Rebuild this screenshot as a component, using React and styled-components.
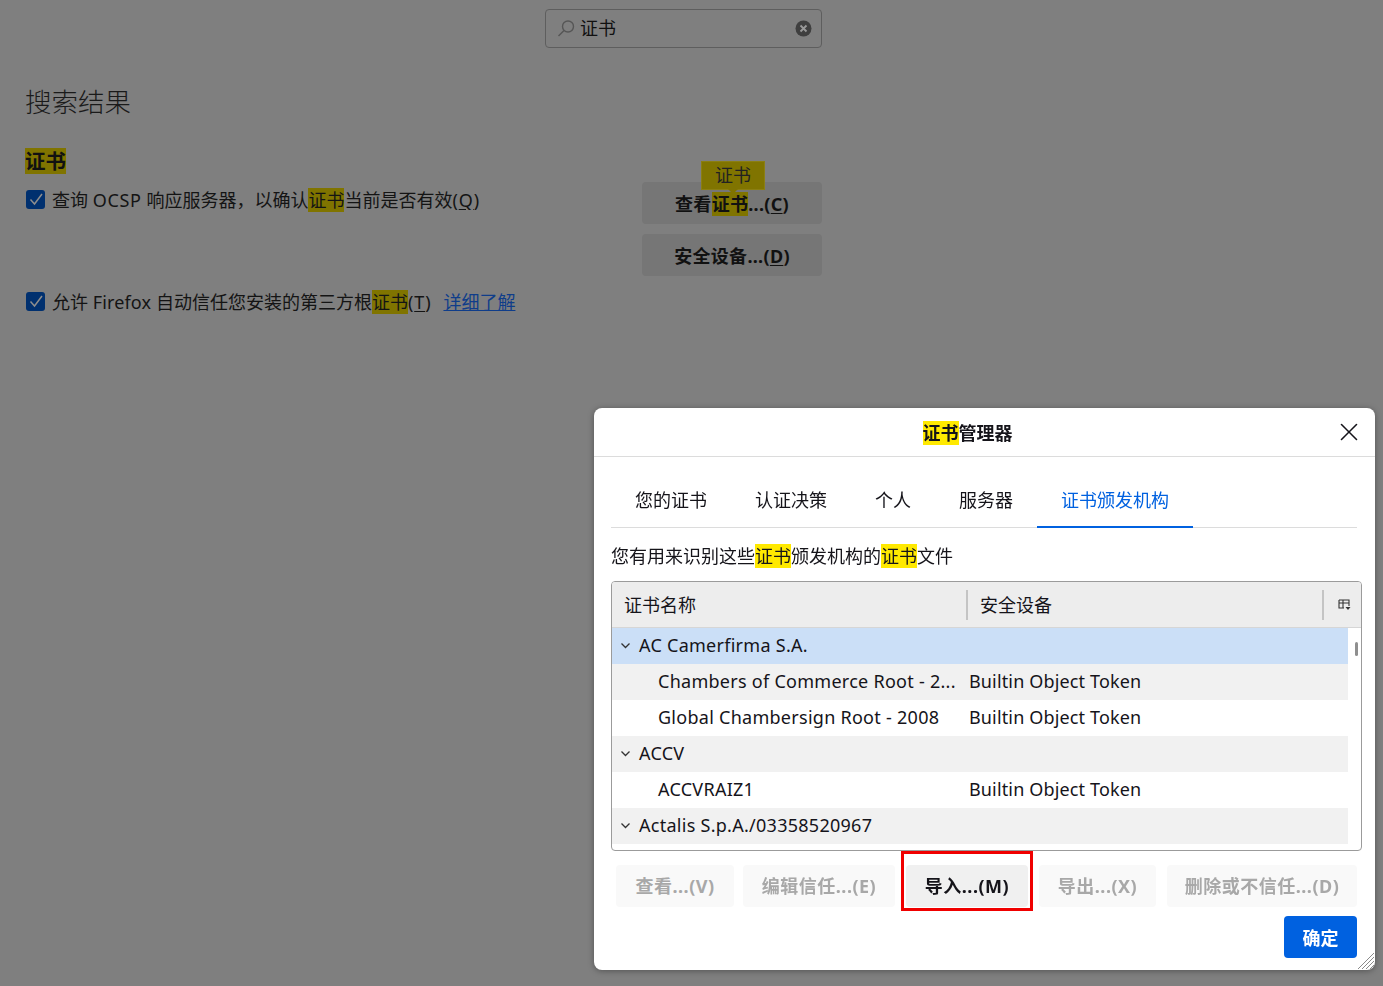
import React from 'react';
import styled, { createGlobalStyle } from 'styled-components';
import { X } from 'lucide-react';

const Global = createGlobalStyle`
html, body {
  margin: 0;
  background: #7f7f7f;
  overflow: hidden;
}
body {
  font-family: "Noto Sans", "Noto Sans CJK SC", sans-serif;
  color: #111;
}
`

const Page = styled.div`
width: 797px;
height: 986px;
padding: 9px 0 0 25px;
box-sizing: content-box;
`
const SearchBox = styled.div`
width: 277px;
height: 39px;
margin-left: 520px;
box-sizing: border-box;
border: 1px solid #5e5e5e;
border-radius: 4px;
display: flex;
align-items: center;
padding: 0 9px 0 10px;
gap: 4px;
font-size: 18px;
`
const SearchText = styled.span`
flex: 1;
padding-bottom: 3px;
`
const Heading = styled.h1`
margin: 34px 0 0;
font-size: 26.5px;
line-height: 40px;
font-weight: 300;
color: #1a1a1a;
`
const SectionTitle = styled.h2`
margin: 26px 0 0;
font-size: 20.5px;
line-height: 26px;
font-weight: 700;
display: flex;
`
const Settings = styled.div`
display: flex;
justify-content: space-between;
margin-top: 12px;
`
const Column = styled.div`
display: flex;
flex-direction: column;
`
const CheckRow = styled.label`
display: flex;
align-items: center;
gap: 7px;
height: 26px;
margin-top: ${p => p.$top || 0}px;
font-size: 18px;
color: #141414;
white-space: nowrap;
`
const Box = styled.span`
width: 19px;
height: 19px;
margin-left: 1px;
border-radius: 3px;
background: #00306f;
display: flex;
align-items: center;
justify-content: center;
flex: none;
`
const Mark = styled.span`
background: ${p => (p.$bright ? '#ffe900' : '#807400')};
`
const Latin = styled.span`
letter-spacing: ${p => p.$s}px;
`
const Key = styled.span`
letter-spacing: 0.9px;
`
const KeyLetter = styled.span`
text-decoration: underline;
text-underline-offset: 2px;
`
const LearnMore = styled.a`
color: #0f3d8a;
text-decoration: underline;
margin-left: 5px;
`
const SideButtons = styled.div`
display: flex;
flex-direction: column;
gap: 10px;
width: 180px;
margin-top: -4px;
`
const DimButton = styled.div`
position: relative;
height: 42px;
border-radius: 4px;
background: #767676;
display: flex;
align-items: center;
justify-content: center;
font-size: 18px;
font-weight: 700;
letter-spacing: 0.3px;
color: #111;
`
const Tip = styled.div`
position: absolute;
left: 59px;
top: -21px;
width: 64px;
height: 29px;
box-sizing: border-box;
border: 1px solid #8b7f12;
background: #807400;
color: #222;
font-size: 18px;
font-weight: 400;
letter-spacing: 0;
text-align: center;
line-height: 27px;
&::after {
  content: "";
  position: absolute;
  left: 26px;
  bottom: -5px;
  border: 5px solid transparent;
  border-bottom: 0;
  border-top-color: #807400;
}
`
const Dialog = styled.div`
position: fixed;
left: 594px;
top: 408px;
width: 781px;
height: 562px;
background: #fff;
border-radius: 8px;
box-shadow: 0 1px 6px rgba(0, 0, 0, 0.35);
display: flex;
flex-direction: column;
overflow: hidden;
`
const TitleBar = styled.div`
position: relative;
height: 49px;
flex: none;
box-sizing: border-box;
padding-right: 34px;
border-bottom: 1px solid #dcdcdc;
display: flex;
align-items: center;
justify-content: center;
font-size: 18px;
font-weight: 700;
color: #15141a;
`
const CloseBtn = styled.span`
position: absolute;
right: 11px;
top: 9px;
display: flex;
color: #15141a;
`
const Body = styled.div`
flex: 1;
display: flex;
flex-direction: column;
padding: 0 13px 12px 17px;
position: relative;
`
const Tabs = styled.div`
display: flex;
margin-top: 25px;
margin-right: 5px;
height: 46px;
box-sizing: border-box;
border-bottom: 1px solid #dcdcdc;
`
const Tab = styled.div`
padding: 0 24px;
height: 46px;
box-sizing: border-box;
font-size: 18px;
line-height: 36px;
color: ${p => (p.$active ? '#0061e0' : '#15141a')};
border-bottom: 2px solid ${p => (p.$active ? '#0061e0' : 'transparent')};
`
const Description = styled.p`
margin: 14px 0 0;
font-size: 18px;
line-height: 28px;
color: #15141a;
display: flex;
`
const Table = styled.div`
position: relative;
margin-top: 11px;
height: 270px;
box-sizing: border-box;
border: 1px solid #9b9b9b;
border-radius: 4px;
overflow: hidden;
`
const Head = styled.div`
height: 46px;
box-sizing: border-box;
background: #ededed;
border-bottom: 1px solid #d6d6d6;
display: grid;
grid-template-columns: 356px 356px 1fr;
align-items: center;
font-size: 18px;
color: #15141a;
`
const HeadCell = styled.div`
height: 30px;
line-height: 30px;
padding-left: ${p => p.$pad || 12}px;
box-sizing: border-box;
border-right: ${p => (p.$last ? 'none' : '2px solid #c4c4c4')};
display: flex;
align-items: center;
`
const Rows = styled.div`
width: 736px;
`
const Row = styled.div`
height: 36px;
box-sizing: border-box;
padding-bottom: 2px;
display: grid;
grid-template-columns: 357px 1fr;
align-items: center;
font-size: 18px;
color: #15141a;
white-space: nowrap;
background: ${p => p.$bg || '#fff'};
`
const Name = styled.div`
display: flex;
align-items: center;
padding-left: ${p => (p.$group ? 8 : 46)}px;
gap: 8px;
letter-spacing: 0.27px;
`
const Token = styled.div`
letter-spacing: 0.15px;
`
const Thumb = styled.div`
position: absolute;
right: 3px;
top: 60px;
width: 3px;
height: 14px;
border-radius: 2px;
background: #8f8f8f;
`
const Actions = styled.div`
display: flex;
margin-top: 14px;
padding-left: 5px;
margin-right: 5px;
gap: 11px;
`
const Action = styled.div`
position: relative;
height: 42px;
width: ${p => p.$w}px;
box-sizing: border-box;
padding-bottom: 2px;
border-radius: 4px;
background: ${p => (p.$on ? '#f0f0f0' : '#f9f9f9')};
color: ${p => (p.$on ? '#15141a' : '#a8a8a8')};
font-size: 18px;
font-weight: 700;
letter-spacing: 0.5px;
display: flex;
align-items: center;
justify-content: center;
&:first-child {
  margin-right: -2px;
}
`
const RedFrame = styled.div`
position: absolute;
left: -5px;
top: -14px;
width: 132px;
height: 60px;
box-sizing: border-box;
border: 3px solid #f00000;
`
const Footer = styled.div`
display: flex;
justify-content: flex-end;
margin-top: 9px;
margin-right: 5px;
`
const Primary = styled.div`
width: 73px;
height: 42px;
border-radius: 4px;
background: #0061e0;
color: #fff;
font-size: 18px;
font-weight: 700;
display: flex;
align-items: center;
justify-content: center;
`
const Grip = styled.svg`
position: absolute;
right: 0;
bottom: 0;
`

const Check = () => (
  <Box>
    <svg width="16" height="16" viewBox="0 0 16 16" fill="none" stroke="#8d8d8d" strokeWidth="1.5">
      <path d="M2.5 8.5 L6.5 13 L14 3" />
    </svg>
  </Box>
)

const Chevron = () => (
  <svg width="11" height="11" viewBox="0 0 11 11" fill="none" stroke="#333" strokeWidth="1.3">
    <path d="M1.5 3.5 L5.5 7.5 L9.5 3.5" />
  </svg>
)

const Access = ({ letra }) => (
  <Key>(<KeyLetter>{letra}</KeyLetter>)</Key>
)

const lista = [
  { nome: 'AC Camerfirma S.A.', grupo: true, cor: '#cbdff7' },
  { nome: 'Chambers of Commerce Root - 2...', token: 'Builtin Object Token', cor: '#f1f1f1' },
  { nome: 'Global Chambersign Root - 2008', token: 'Builtin Object Token' },
  { nome: 'ACCV', grupo: true, cor: '#f1f1f1' },
  { nome: 'ACCVRAIZ1', token: 'Builtin Object Token' },
  { nome: 'Actalis S.p.A./03358520967', grupo: true, cor: '#f1f1f1' },
]

const App = () => {
  const linhas = lista.map((item) => (
    <Row key={item.nome} $bg={item.cor}>
      <Name $group={item.grupo}>
        {item.grupo && <Chevron />}
        {item.nome}
      </Name>
      <Token>{item.token}</Token>
    </Row>
  ))

  return (
    <>
      <Global />
      <Page>
        <SearchBox>
          <svg width="20" height="20" viewBox="0 0 20 20" fill="none" stroke="#565656" strokeWidth="1.4">
            <circle cx="12" cy="7.5" r="5.5" />
            <path d="M8 11.5 L2.5 17" />
          </svg>
          <SearchText>证书</SearchText>
          <svg width="17" height="17" viewBox="0 0 17 17">
            <circle cx="8.5" cy="8.5" r="8" fill="#3f3f3f" />
            <path d="M5.5 5.5 L11.5 11.5 M11.5 5.5 L5.5 11.5" stroke="#999" strokeWidth="1.8" />
          </svg>
        </SearchBox>
        <Heading>搜索结果</Heading>
        <SectionTitle><Mark>证书</Mark></SectionTitle>
        <Settings>
          <Column>
            <CheckRow>
              <Check />
              <span>查询 <Latin $s={0.7}>OCSP</Latin> 响应服务器，以确认<Mark>证书</Mark>当前是否有效<Access letra="Q" /></span>
            </CheckRow>
          </Column>
          <SideButtons>
            <DimButton>
              <span>查看<Mark>证书</Mark>...(<KeyLetter>C</KeyLetter>)</span>
              <Tip>证书</Tip>
            </DimButton>
            <DimButton><span>安全设备...(<KeyLetter>D</KeyLetter>)</span></DimButton>
          </SideButtons>
        </Settings>
        <CheckRow $top={12}>
          <Check />
          <span>允许 <Latin $s={0.15}>Firefox</Latin> 自动信任您安装的第三方根<Mark>证书</Mark><Access letra="T" /></span>
          <LearnMore>详细了解</LearnMore>
        </CheckRow>
      </Page>

      <Dialog>
        <TitleBar>
          <span><Mark $bright>证书</Mark>管理器</span>
          <CloseBtn><X size={30} strokeWidth={1.25} /></CloseBtn>
        </TitleBar>
        <Body>
          <Tabs>
            <Tab>您的证书</Tab>
            <Tab>认证决策</Tab>
            <Tab>个人</Tab>
            <Tab>服务器</Tab>
            <Tab $active>证书颁发机构</Tab>
          </Tabs>
          <Description>
            <span>您有用来识别这些<Mark $bright>证书</Mark>颁发机构的<Mark $bright>证书</Mark>文件</span>
          </Description>
          <Table>
            <Head>
              <HeadCell>证书名称</HeadCell>
              <HeadCell>安全设备</HeadCell>
              <HeadCell $last $pad={14}>
                <svg width="13" height="13" viewBox="0 0 13 13" fill="none" stroke="#333" strokeWidth="1.1">
                  <path d="M1 2 H11 V8 M1 2 V10 H6 M1 5 H11 M5 2 V10" />
                  <path d="M7.5 9 H12.5 L10 12 Z" fill="#333" stroke="none" />
                </svg>
              </HeadCell>
            </Head>
            <Rows>{linhas}</Rows>
            <Thumb />
          </Table>
          <Actions>
            <Action $w={118}>查看...(V)</Action>
            <Action $w={152}>编辑信任...(E)</Action>
            <Action $w={122} $on>导入...(M)<RedFrame /></Action>
            <Action $w={117}>导出...(X)</Action>
            <Action $w={190}>删除或不信任...(D)</Action>
          </Actions>
          <Footer>
            <Primary>确定</Primary>
          </Footer>
          <Grip width="18" height="18" viewBox="0 0 18 18" stroke="#8a8a8a" strokeWidth="1">
            <path d="M1 17 L17 1 M5 17 L17 5 M9 17 L17 9 M13 17 L17 13" />
          </Grip>
        </Body>
      </Dialog>
    </>
  )
}

export default App;
